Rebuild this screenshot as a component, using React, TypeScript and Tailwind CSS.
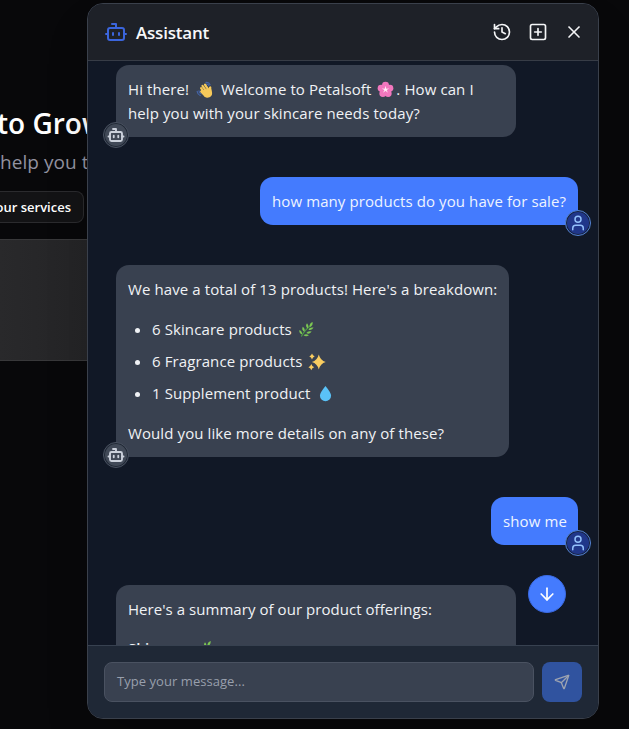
import type { ReactNode } from "react";
import { ArrowDown, Bot, History, Send, SquarePlus, User, X } from "lucide-react";

function Wave() {
  return (
    <svg viewBox="0 0 18 18" className="mx-[3px] inline-block size-[18px] align-[-4px]">
      <path d="M1.2 10.5q.4 3 3 4M3 9.8q.3 2 2 3M10 1.5q3-.4 4 2.2M10.5 3.2q1.7 0 2.3 1.4" fill="none" stroke="#4463a5" strokeWidth="1.3" strokeLinecap="round" />
      <path d="M5.1 7.2 8.4 12M6.5 4.8l4 5.8M9 3.6l4 6.2M5.2 10.5l4 4.2" stroke="#f6c95a" strokeWidth="2.2" strokeLinecap="round" />
      <path d="M6 9.5 12.5 7.5q.6-2.4 2-2.3 1.2.2.8 2.2.6 2.4.8 4.600.2 3-2.600 4.200-3 1.200-5-.8z" fill="#f6c95a" />
    </svg>
  );
}

function Blossom() {
  return (
    <svg viewBox="0 0 18 18" className="mx-[2px] inline-block size-[17px] align-[-3px]">
      <g fill="#f277be">
        <circle cx="9" cy="4.4" r="3.7" />
        <circle cx="13.6" cy="7.7" r="3.7" />
        <circle cx="11.8" cy="13.2" r="3.7" />
        <circle cx="6.2" cy="13.2" r="3.7" />
        <circle cx="4.4" cy="7.7" r="3.7" />
        <circle cx="9" cy="9" r="4" />
      </g>
      <path d="m9 5 .8 3.200 3.200-.3-2.800 1.500 1.300 3L9 10.200l-2.500 2.200 1.300-3L5 7.900l3.200.3z" fill="#fff0f7" />
    </svg>
  );
}

function Herb({ className }: { className: string }) {
  return (
    <svg viewBox="0 0 18 18" className={className}>
      <path d="M3.5 16.5Q6 11 13.5 4.5" fill="none" stroke="#4d9b45" strokeWidth="1.1" />
      <g fill="#7cc653">
        <path d="M15.5 1q-4 1.500-3 5.500 3.500-1.500 3-5.500z" />
        <path d="M9.500 2.500q-2.300 3.300.8 5.500 1.600-3-.8-5.500z" />
        <path d="M5 6q-1.500 3.600 1.700 5.300Q8 8 5 6z" />
        <path d="M1.500 9.500q-.7 3.700 2.800 4.600.3-3.400-2.800-4.600z" />
        <path d="M16.500 7q-4.200-1-5.400 2.300 3.700 1.200 5.400-2.300z" />
        <path d="M14.500 11.200q-4-1.300-5.600 1.600 3.400 1.800 5.600-1.600z" />
        <path d="M11.500 15.200q-3-2.200-5.600-.1 2.600 2.300 5.600.1z" />
      </g>
    </svg>
  );
}

function Sparkles() {
  return (
    <svg viewBox="0 0 18 18" className="ml-[6px] inline-block size-[18px] align-[-4px]">
      <path
        d="M10.800 1.500Q12.300 7.500 17.700 9 12.300 10.500 10.800 16.500 9.300 10.500 3.900 9 9.300 7.500 10.800 1.500zM4 .6q.7 2.200 2.700 2.900Q4.700 4.200 4 6.400 3.300 4.200 1.300 3.500 3.300 2.800 4 .6zM3.300 11.100q.7 2.400 2.900 3.100-2.200.7-2.900 3.100-.7-2.400-2.900-3.100 2.200-.7 2.900-3.100z"
        fill="#f9cc60"
      />
    </svg>
  );
}

function Droplet() {
  return (
    <svg viewBox="0 0 14 18" className="ml-[9px] inline-block h-[17px] w-[13px] align-[-3px]">
      <path d="M7 .8Q1 8 1 11.300a6 6 0 0 0 12 0Q13 8 7 .8z" fill="#5ac2f8" />
    </svg>
  );
}

function BotMessage({ className, children }: { className: string; children: ReactNode }) {
  return (
    <div className={`relative shrink-0 self-start rounded-[13px] rounded-bl-none bg-[#394150] p-3 text-[#f0f2f5] ${className}`}>
      {children}
      <span className="absolute -bottom-[11px] -left-[13px] flex size-[26px] items-center justify-center rounded-full border border-[#4a5261] bg-[#1f2734]">
        <span className="flex size-[22px] items-center justify-center rounded-full bg-[#414957]">
          <Bot className="size-[18px] text-[#ccd2dc]" strokeWidth={2.5} />
        </span>
      </span>
    </div>
  );
}

function UserMessage({ className, children }: { className: string; children: ReactNode }) {
  return (
    <div className={`relative shrink-0 self-end whitespace-nowrap rounded-[13px] rounded-br-none bg-[#447bfe] p-3 text-[#eef4ff] ${className}`}>
      {children}
      <span className="absolute -bottom-[11px] -right-[13px] flex size-[26px] items-center justify-center rounded-full border border-[#5383d5] bg-[#17213b]">
        <span className="flex size-[22px] items-center justify-center rounded-full bg-[#20378a]">
          <User className="size-[18px] text-[#92c0fb]" strokeWidth={2} />
        </span>
      </span>
    </div>
  );
}

export default function App() {
  return (
    <div className="relative h-[729px] w-full overflow-hidden bg-[#08080a] font-['Open_Sans','Noto_Sans',sans-serif] text-[15px] leading-6">
      <main className="flex w-[87px] flex-col overflow-hidden whitespace-nowrap pt-[102px]">
        <h1 className="-ml-[3px] text-[28px] font-semibold leading-[42px] text-white">to Grow</h1>
        <p className="mt-[3px] text-[19px] leading-[30px] tracking-[0.05px] text-[#9292a0]">help you t</p>
        <div className="mt-[14px] flex h-8 w-[84px] items-center justify-end rounded-r-lg border border-l-0 border-[#2b2b2e] bg-[#131315] pr-3 text-[13px] font-semibold text-white">
          our services
        </div>
        <div className="mt-4 h-[122px] border-y border-[#38383a] bg-linear-to-r from-[#29292b] to-[#242426]" />
      </main>

      <section className="absolute left-[87px] top-[3px] flex h-[716px] w-[512px] flex-col overflow-hidden rounded-2xl border border-[#3a404b] bg-[#111826] shadow-2xl">
        <header className="flex h-[57px] shrink-0 items-center border-b border-[#373c46] bg-[#1e2128] pl-4 pr-[14px]">
          <Bot className="size-6 text-[#3b65dc]" />
          <h2 className="ml-2 mt-0.5 text-[17px] font-semibold tracking-[-0.2px] text-[#f7f8fa]">Assistant</h2>
          <div className="ml-auto flex gap-4 text-[#f4f5f7]">
            <History className="size-5" />
            <SquarePlus className="size-5" />
            <X className="size-5" />
          </div>
        </header>

        <div className="relative min-h-0 flex-1">
          <div className="flex h-full flex-col gap-10 overflow-hidden pl-7 pr-5 pt-1 tracking-[0.1px]">
            <BotMessage className="w-[400px] whitespace-nowrap">
              <p>
                Hi there! <Wave /> Welcome to Petalsoft <Blossom />. How can I
                <br />
                help you with your skincare needs today?
              </p>
            </BotMessage>
            <UserMessage className="w-[318px]">how many products do you have for sale?</UserMessage>
            <BotMessage className="w-[393px] whitespace-nowrap">
              <p>We have a total of 13 products! Here's a breakdown:</p>
              <ul className="my-4 list-disc space-y-2 pl-6">
                <li>6 Skincare products<Herb className="ml-[6px] inline-block size-[17px] align-[-3px]" /></li>
                <li>6 Fragrance products<Sparkles /></li>
                <li>1 Supplement product<Droplet /></li>
              </ul>
              <p>Would you like more details on any of these?</p>
            </BotMessage>
            <UserMessage className="w-[87px]">show me</UserMessage>
            <BotMessage className="w-[400px]">
              <p className="tracking-[0.05px]">Here's a summary of our product offerings:</p>
              <p className="mt-[15px] font-semibold">
                Skincare<Herb className="ml-[5px] inline-block size-[17px] align-[-3px]" />
              </p>
            </BotMessage>
          </div>
          <button className="absolute bottom-8 right-8 flex size-[38px] items-center justify-center rounded-full border border-[#3a69e2] bg-[#447bfe] text-white">
            <ArrowDown className="size-5" />
          </button>
        </div>

        <footer className="flex h-[73px] shrink-0 gap-2 border-t border-[#374150] bg-[#1f2836] p-4">
          <div className="flex h-10 w-[430px] items-center rounded-lg border border-[#4a5261] bg-[#394150] px-3 pb-0.5 text-[13px] tracking-[0.05px] text-[#989fac]">
            Type your message...
          </div>
          <button className="flex size-10 items-center justify-center rounded-lg bg-[#30539f] text-[#9ca3b1]">
            <Send className="size-4" />
          </button>
        </footer>
      </section>
    </div>
  );
}
